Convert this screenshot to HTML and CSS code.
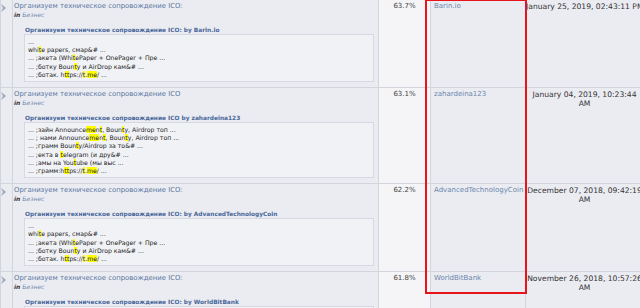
FILE: index.html
```html
<!DOCTYPE html>
<html lang="ru">
<head>
    <meta charset="UTF-8">
    <title>Результаты поиска</title>
    <link rel="stylesheet" href="styles.css">
</head>
<body>

<div class="results">
    <table class="search-table">
        <colgroup>
            <col class="c-icon">
            <col class="c-subject">
            <col class="c-rel">
            <col class="c-member">
            <col class="c-date">
        </colgroup>
        <tr>
            <td class="icon-cell"><svg width="6" height="8" viewBox="0 0 6 8"><path d="M0 0 L5 4 L0 8 L2 4 Z" fill="#98a2b6"/></svg></td>
            <td class="subject-cell">
                <a class="topic" href="#">Организуем техническое сопровождение ICO:</a>
                <div class="board"><b>in</b> <a href="#">Бизнес</a></div>
                <div class="quote-head">Организуем техническое сопровождение ICO: by Barin.io</div>
                <div class="quote">
                    ...<br>
                    whi<span class="hl">t</span>e papers, смар&amp;# ...<br>
                    ... ;акета (Whi<span class="hl">t</span>ePaper + OnePager + Пре ...<br>
                    ... ;ботку Boun<span class="hl">t</span>y и AirDrop кам&amp;# ...<br>
                    ... ;ботак. h<span class="hl">tt</span>ps://<span class="hl">t</span>.<span class="hl">me</span>/ ...
                </div>
            </td>
            <td class="rel-cell">63.7%</td>
            <td class="member-cell"><a href="#">Barin.io</a></td>
            <td class="date-cell nowrap">January 25, 2019, 02:43:11 PM</td>
        </tr>
        <tr>
            <td class="icon-cell"><svg width="6" height="8" viewBox="0 0 6 8"><path d="M0 0 L5 4 L0 8 L2 4 Z" fill="#98a2b6"/></svg></td>
            <td class="subject-cell">
                <a class="topic" href="#">Организуем техническое сопровождение ICO</a>
                <div class="board"><b>in</b> <a href="#">Бизнес</a></div>
                <div class="quote-head">Организуем техническое сопровождение ICO by zahardeina123</div>
                <div class="quote">
                    ... ;зайн Announce<span class="hl">me</span>n<span class="hl">t</span>, Boun<span class="hl">t</span>y, Airdrop топ ...<br>
                    ... ; нами Announce<span class="hl">me</span>n<span class="hl">t</span>, Boun<span class="hl">t</span>y, Airdrop топ ...<br>
                    ... ;грамм Boun<span class="hl">t</span>y/Airdrop за то&amp;# ...<br>
                    ... ;екта в <span class="hl">t</span>elegram (и дру&amp;# ...<br>
                    ... ;амы на You<span class="hl">t</span>ube (мы выс ...<br>
                    ... ;грамм:h<span class="hl">tt</span>ps://<span class="hl">t</span>.<span class="hl">me</span>/ ...
                </div>
            </td>
            <td class="rel-cell">63.1%</td>
            <td class="member-cell"><a href="#">zahardeina123</a></td>
            <td class="date-cell">January 04, 2019, 10:23:44<br>AM</td>
        </tr>
        <tr>
            <td class="icon-cell"><svg width="6" height="8" viewBox="0 0 6 8"><path d="M0 0 L5 4 L0 8 L2 4 Z" fill="#98a2b6"/></svg></td>
            <td class="subject-cell">
                <a class="topic" href="#">Организуем техническое сопровождение ICO:</a>
                <div class="board"><b>in</b> <a href="#">Бизнес</a></div>
                <div class="quote-head">Организуем техническое сопровождение ICO: by AdvancedTechnologyCoin</div>
                <div class="quote">
                    ...<br>
                    whi<span class="hl">t</span>e papers, смар&amp;# ...<br>
                    ... ;акета (Whi<span class="hl">t</span>ePaper + OnePager + Пре ...<br>
                    ... ;ботку Boun<span class="hl">t</span>y и AirDrop кам&amp;# ...<br>
                    ... ;ботак. h<span class="hl">tt</span>ps://<span class="hl">t</span>.<span class="hl">me</span>/ ...
                </div>
            </td>
            <td class="rel-cell">62.2%</td>
            <td class="member-cell"><a href="#">AdvancedTechnologyCoin</a></td>
            <td class="date-cell">December 07, 2018, 09:42:19<br>AM</td>
        </tr>
        <tr>
            <td class="icon-cell"><svg width="6" height="8" viewBox="0 0 6 8"><path d="M0 0 L5 4 L0 8 L2 4 Z" fill="#98a2b6"/></svg></td>
            <td class="subject-cell">
                <a class="topic" href="#">Организуем техническое сопровождение ICO:</a>
                <div class="board"><b>in</b> <a href="#">Бизнес</a></div>
                <div class="quote-head">Организуем техническое сопровождение ICO: by WorldBitBank</div>
                <div class="quote quote-cut"></div>
            </td>
            <td class="rel-cell">61.8%</td>
            <td class="member-cell"><a href="#">WorldBitBank</a></td>
            <td class="date-cell">November 26, 2018, 10:57:26<br>AM</td>
        </tr>
    </table>

    <div class="marker"></div>
</div>

</body>
</html>
```

FILE: styles.css
```css
body {
    margin: 0;
    padding: 0;
    background-color: #ffffff;
    font-family: 'DejaVu Sans', Verdana, sans-serif;
    color: #333;
    overflow: hidden;
}
a {
    color: #5373a0;
    text-decoration: none;
}
.results {
    position: relative;
    width: 643px;
}
.search-table {
    border-collapse: collapse;
    table-layout: fixed;
    width: 643px;
    margin-top: -1px;
}
.c-icon { width: 12px; }
.c-subject { width: 366px; }
.c-rel { width: 52px; }
.c-member { width: 95px; }
.c-date { width: 118px; }
.search-table td {
    vertical-align: top;
    border: 1px solid #d2d5dc;
    background-color: #ebecf1;
    padding: 0;
}
.icon-cell svg {
    display: block;
    margin: 4px 0 0 0;
}
.subject-cell {
    padding: 2px 4px 5px 1px !important;
}
.topic {
    display: block;
    font-size: 6.9px;
    line-height: 9px;
    color: #5876a2;
}
.board {
    font-size: 6px;
    line-height: 8px;
    font-style: italic;
    color: #333;
}
.board a {
    color: #6f88ad;
}
.quote-head {
    margin: 7px 0 0 11px;
    font-size: 5.85px;
    line-height: 8px;
    font-weight: bold;
    color: #48679a;
}
.quote {
    margin-left: 10px;
    padding: 3px 3px 2px 3px;
    background-color: #f1f2f6;
    border: 1px solid #d6d9e1;
    font-size: 6.2px;
    line-height: 8.2px;
    color: #222;
}
.quote-cut {
    height: 40px;
}
.hl {
    background-color: #ffff00;
}
.rel-cell {
    background-color: #f5f5f7 !important;
    text-align: center;
    font-size: 7px;
    line-height: 9px;
    padding-top: 2px !important;
    color: #444;
}
.member-cell {
    font-size: 7px;
    line-height: 9px;
    padding: 2px 2px 0 3px !important;
}
.member-cell a {
    color: #6a86ae;
}
.date-cell {
    text-align: center;
    font-size: 7.6px;
    line-height: 9px;
    padding-top: 2px !important;
    color: #333;
}
.nowrap {
    white-space: nowrap;
}
.marker {
    position: absolute;
    left: 425px;
    top: 0;
    width: 98px;
    height: 291px;
    border: 2px solid #e8141c;
}
```
